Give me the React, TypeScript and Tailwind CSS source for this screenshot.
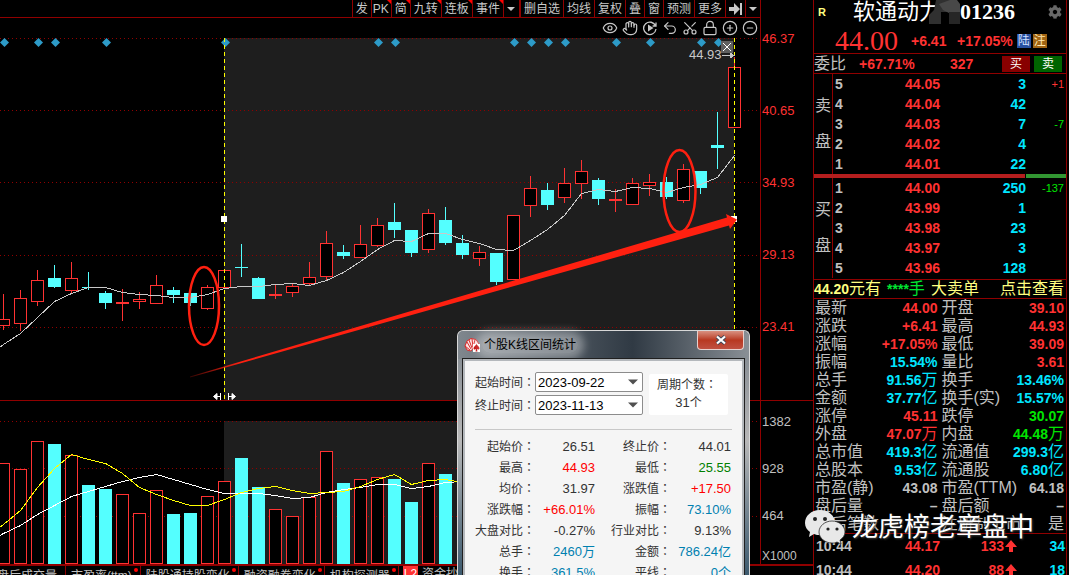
import React from 'react';
import { CircleMinus, CirclePlus, Eye, Hand, Lock, Scissors, Undo2 } from 'lucide-react';
import { FaCog } from 'react-icons/fa';
import clsx from 'clsx';

const STEP = 17;
const centerOf = (i: number) => 3.5 + i * STEP;

type Candle = [high: number, top: number, bottom: number, low: number, up: 0 | 1];

const candles: Candle[] = [
  [294, 319, 326, 330, 1],
  [290, 298, 324, 331, 1],
  [270, 280, 302, 306, 1],
  [265, 278, 287, 288, 0],
  [262, 278, 291, 294, 1],
  [272, 287, 288, 290, 0],
  [291, 293, 303, 309, 0],
  [289, 302, 304, 321, 1],
  [292, 299, 302, 309, 1],
  [275, 285, 304, 304, 1],
  [287, 290, 295, 303, 0],
  [293, 293, 303, 306, 0],
  [285, 287, 309, 310, 1],
  [270, 270, 288, 288, 1],
  [244, 267, 268, 277, 0],
  [277, 278, 299, 299, 0],
  [285, 294, 296, 299, 1],
  [284, 286, 293, 297, 1],
  [262, 277, 284, 285, 1],
  [231, 243, 277, 280, 1],
  [245, 252, 256, 259, 0],
  [225, 244, 258, 258, 1],
  [218, 225, 246, 247, 1],
  [203, 222, 230, 238, 0],
  [230, 230, 253, 257, 0],
  [209, 213, 250, 253, 1],
  [207, 220, 243, 245, 0],
  [235, 243, 255, 259, 0],
  [246, 252, 259, 266, 1],
  [253, 253, 282, 285, 0],
  [215, 215, 280, 280, 1],
  [176, 188, 206, 217, 1],
  [183, 190, 205, 210, 0],
  [168, 183, 198, 203, 1],
  [160, 171, 184, 199, 1],
  [178, 180, 199, 205, 0],
  [189, 199, 201, 212, 1],
  [178, 183, 205, 205, 1],
  [174, 182, 186, 196, 1],
  [177, 182, 197, 199, 0],
  [164, 169, 201, 203, 1],
  [171, 171, 188, 194, 0],
  [112, 145, 148, 169, 0],
  [57, 67, 128, 128, 1],
];

// The first value of each average belongs to the candle left of the visible range
const priceMa = [
  356, 344, 333, 317, 301, 293, 287, 287, 292, 294, 295, 297, 297, 294, 288, 286, 286, 284, 283, 285, 280, 272,
  261, 249, 240, 241, 233, 233, 239, 243, 249, 250, 240, 229, 215, 193, 189, 191, 187, 188, 192, 187, 184, 177,
  155,
];

// [top, up]
const volumes: [number, 0 | 1][] = [
  [463, 1], [469, 1], [441, 1], [444, 0], [455, 1], [485, 0], [489, 0], [494, 1], [513, 1],
  [490, 1], [514, 0], [513, 0], [496, 1], [481, 1], [458, 0], [487, 0], [509, 1], [516, 1],
  [497, 1], [451, 1], [483, 0], [479, 1], [477, 1], [479, 0], [502, 0], [463, 1], [474, 0],
];

const volumeMa5 = [
  537, 524, 510, 487, 468, 454, 459, 463, 473, 487, 494, 500, 505, 505, 499, 492, 488, 486, 490, 493, 492, 491,
  486, 479, 474, 484, 480, 479, 482,
];

const volumeMa10 = [
  542, 533, 525, 514, 505, 496, 491, 486, 481, 477, 474, 479, 484, 489, 493, 493, 493, 495, 498, 497, 492, 489,
  487, 484, 484, 488, 486, 482, 481,
];

const eventMarks = [0, 2, 3, 6, 13, 22, 23, 30, 31, 32, 33, 36, 38, 41, 42];

const toPoints = (values: number[]) => values.map((y, i) => `${centerOf(i - 1)},${y + 0.5}`).join(' ');

const menuItems = [
  { label: '发' },
  { label: 'PK', hot: true },
  { label: '简', hot: true },
  { label: '九转', hot: true },
  { label: '连板', hot: true },
  { label: '事件', hot: true },
];

const menuItemsRight = ['删自选', '均线', '复权', '叠', '窗', '预测', '更多'];

const bottomTabs = [
  { label: '盘后成交量', dot: false },
  { label: '市盈率(ttm)', dot: true },
  { label: '陆股通持股变化', dot: true },
  { label: '融资融券变化', dot: true },
  { label: '机构探测器', dot: true },
];

const asks = [
  ['5', '44.05', '3', '+1'],
  ['4', '44.04', '42', ''],
  ['3', '44.03', '7', '-7'],
  ['2', '44.02', '4', ''],
  ['1', '44.01', '22', ''],
];

const bids = [
  ['1', '44.00', '250', '-137'],
  ['2', '43.99', '1', ''],
  ['3', '43.98', '23', ''],
  ['4', '43.97', '3', ''],
  ['5', '43.96', '128', ''],
];

const RED = 'text-[#ff3232]';
const CYAN = 'text-[#00e6ff]';
const GREEN = 'text-[#00e600]';
const GRAY = 'text-[#c0c0c0]';

type Stat = [label: string, value: string, unit: string, color: string];

const stats: Stat[] = [
  ['最新', '44.00', '', RED],
  ['开盘', '39.10', '', RED],
  ['涨跌', '+6.41', '', RED],
  ['最高', '44.93', '', RED],
  ['涨幅', '+17.05%', '', RED],
  ['最低', '39.09', '', RED],
  ['振幅', '15.54%', '', CYAN],
  ['量比', '3.61', '', RED],
  ['总手', '91.56', '万', CYAN],
  ['换手', '13.46%', '', CYAN],
  ['金额', '37.77', '亿', CYAN],
  ['换手(实)', '15.57%', '', CYAN],
  ['涨停', '45.11', '', RED],
  ['跌停', '30.07', '', GREEN],
  ['外盘', '47.07', '万', RED],
  ['内盘', '44.48', '万', GREEN],
  ['总市值', '419.3', '亿', CYAN],
  ['流通值', '299.3', '亿', CYAN],
  ['总股本', '9.53', '亿', CYAN],
  ['流通股', '6.80', '亿', CYAN],
  ['市盈(静)', '43.08', '', GRAY],
  ['市盈(TTM)', '64.18', '', GRAY],
  ['盘后量', '–', '', GRAY],
  ['盘后额', '–', '', GRAY],
  ['盘后笔数', '', '', GRAY],
  ['注册制上市', '', '是', GRAY],
];

const rangeStats: [string, string, string][] = [
  ['起始价', '26.51', 'text-[#333333]'],
  ['终止价', '44.01', 'text-[#333333]'],
  ['最高', '44.93', 'text-[#ff0000]'],
  ['最低', '25.55', 'text-[#008000]'],
  ['均价', '31.97', 'text-[#333333]'],
  ['涨跌值', '+17.50', 'text-[#ff0000]'],
  ['涨跌幅', '+66.01%', 'text-[#ff0000]'],
  ['振幅', '73.10%', 'text-[#0080b0]'],
  ['大盘对比', '-0.27%', 'text-[#333333]'],
  ['行业对比', '9.13%', 'text-[#333333]'],
  ['总手', '2460万', 'text-[#0080b0]'],
  ['金额', '786.24亿', 'text-[#0080b0]'],
  ['换手', '361.5%', 'text-[#0080b0]'],
  ['平线', '0个', 'text-[#0080b0]'],
];

const GridLine: React.FC<{ y: number }> = ({ y }) => (
  <line x1="0" x2="760" y1={y + 0.5} y2={y + 0.5} stroke="#900000" strokeDasharray="1 3" />
);

const CandleMark: React.FC<{ index: number; candle: Candle }> = ({ index, candle }) => {
  const [high, top, bottom, low, up] = candle;
  const x = centerOf(index);
  const color = up ? '#ff3232' : '#54ffff';
  const solid = !up || bottom - top < 3;

  return (
    <g>
      <line x1={x} x2={x} y1={high} y2={low} stroke={color} />
      {solid ? (
        <rect x={x - 6.5} y={top} width="13" height={bottom - top} fill={color} />
      ) : (
        <rect x={x - 6} y={top + 0.5} width="12" height={bottom - top - 1} fill="#000000" stroke={color} />
      )}
    </g>
  );
};

const PriceChart = () => (
  <svg
    viewBox="0 38 760 362"
    preserveAspectRatio="none"
    className="block w-full h-[362px]"
    shapeRendering="crispEdges"
    role="img"
    aria-label="日K线"
  >
    <defs>
      <linearGradient id="trendFade" gradientUnits="userSpaceOnUse" x1="190" y1="0" x2="240" y2="0">
        <stop offset="0" stopColor="#ff2010" stopOpacity="0.2" />
        <stop offset="1" stopColor="#ff2010" />
      </linearGradient>
    </defs>
    <rect x="224" y="38" width="510" height="362" fill="#1e1e1e" />
    {[38, 110, 182, 255, 327].map((y) => (
      <GridLine key={y} y={y} />
    ))}
    {candles.map((candle, i) => (
      <CandleMark key={i} index={i} candle={candle} />
    ))}
    <polyline points={toPoints(priceMa)} fill="none" stroke="#c8c8c8" />
    {eventMarks.map((i) => (
      <path
        key={i}
        d={`M${centerOf(i) + 1} 38l4.5 4.5l-4.5 4.5l-4.5 -4.5z`}
        fill="#2d9bc8"
        shapeRendering="geometricPrecision"
      />
    ))}

    {/* Selected range */}
    <g stroke="#ffff00" strokeDasharray="4 3">
      <line x1="224.5" x2="224.5" y1="38" y2="400" />
      <line x1="734.5" x2="734.5" y1="38" y2="400" />
    </g>
    <rect x="221" y="216" width="6" height="6" fill="#ffffff" />
    <rect x="731" y="216" width="6" height="6" fill="#ffffff" />
    <g fill="#ffffff" stroke="#ffffff" shapeRendering="geometricPrecision">
      <path d="M213.5 396.5l3.500 -3v6zM217 396.5h3M220.5 393v7" />
      <path d="M235.5 396.5l-3.500 -3v6zM232 396.5h-3M228.5 393v7" />
    </g>

    <rect x="721" y="41" width="12" height="12" fill="#5f5f5f" />
    <path d="M723 43l8 8M731 43l-8 8" stroke="#ffffff" shapeRendering="geometricPrecision" />
    <path d="M722 55.5h12M730 53l4 2.500l-4 2.500z" stroke="#c8c8c8" fill="#c8c8c8" />
    <text x="689" y="59" fill="#c8c8c8" fontSize="13">
      44.93
    </text>

    {/* Hand-drawn marks */}
    <g shapeRendering="geometricPrecision">
      <ellipse cx="204" cy="306" rx="15" ry="39" fill="none" stroke="#ff2010" strokeWidth="2.5" />
      <ellipse cx="679.5" cy="191" rx="16" ry="41" fill="none" stroke="#ff2010" strokeWidth="2.5" />
      <path d="M190 376.5L727 217.500L726 214L737 219.500L730 229L729 225.500L190 377.500z" fill="url(#trendFade)" />
    </g>
  </svg>
);

const VolumeChart = () => (
  <svg
    viewBox="0 401 760 163"
    preserveAspectRatio="none"
    className="block w-full h-[163px]"
    shapeRendering="crispEdges"
    role="img"
    aria-label="成交量"
  >
    <rect x="224" y="421" width="510" height="143" fill="#1e1e1e" />
    {[421, 468, 516].map((y) => (
      <GridLine key={y} y={y} />
    ))}
    {volumes.map(([top, up], i) =>
      up ? (
        <rect key={i} x={centerOf(i) - 6} y={top + 0.5} width="12" height={563 - top} fill="#000000" stroke="#ff3232" />
      ) : (
        <rect key={i} x={centerOf(i) - 6.5} y={top} width="13" height={564 - top} fill="#54ffff" />
      ),
    )}
    <polyline points={toPoints(volumeMa10)} fill="none" stroke="#ffffff" />
    <polyline points={toPoints(volumeMa5)} fill="none" stroke="#ffff00" />
  </svg>
);

const Caret: React.FC<{ className: string }> = ({ className }) => (
  <svg viewBox="0 0 10 5" className={className} aria-hidden="true">
    <path d="M0 0h10l-5 5z" fill="currentColor" />
  </svg>
);

const MenuBar = () => {
  const cell = 'relative flex items-center px-[3px] border-l border-[#900000] leading-none whitespace-nowrap';

  return (
    <nav className="flex justify-end h-[18px] border-b border-[#900000] text-xs text-[#c8c8c8]">
      {menuItems.map((item) => (
        <button key={item.label} className={clsx(cell, item.label === 'PK' && 'w-5 px-px')}>
          {item.label}
          {item.hot && (
            <svg viewBox="0 0 4 4" className="absolute top-0 right-0 w-1 h-1">
              <path d="M0 0h4v4z" fill="#ff0000" />
            </svg>
          )}
        </button>
      ))}
      <button aria-label="更多指标" className={clsx(cell, 'w-4')}>
        <Caret className="w-2 h-1" />
      </button>
      {menuItemsRight.map((label, i) => (
        <button key={label} className={clsx(cell, i === 0 && 'border-l-2')}>
          {label}
        </button>
      ))}
      <button aria-label="展开" className={clsx(cell, 'w-5')}>
        <svg viewBox="0 0 13 12" className="w-[13px] h-3" fill="currentColor">
          <path d="M0 4h5V0l6 6l-6 6V8H0zM11 0h2v12h-2z" />
        </svg>
      </button>
      <button aria-label="菜单" className={clsx(cell, 'w-[15px]')}>
        <Caret className="w-2 h-1" />
      </button>
    </nav>
  );
};

const DrawingTools = () => {
  const icon = 'w-4 h-4';

  return (
    <div className="flex justify-end items-center gap-1 h-5 pr-0.5 text-[#c8c8c8]">
      <button aria-label="显示">
        <Eye className={icon} strokeWidth={1.8} />
      </button>
      <button aria-label="拖动">
        <Hand className={icon} strokeWidth={1.8} />
      </button>
      <button aria-label="回放">
        <svg viewBox="-1 -1 16 16" className={icon} fill="none" stroke="currentColor" strokeWidth="1.3">
          <path d="M12.600 5A6.200 6.200 0 1 0 13 8M13 1.600V5H9.600" />
          <path d="M5 3.500l5.500 3.500l-5.500 3.500z" fill="currentColor" stroke="none" />
        </svg>
      </button>
      <button aria-label="撤销">
        <Undo2 className={icon} strokeWidth={1.8} />
      </button>
      <button aria-label="剪切">
        <Scissors className="w-4 h-4 -rotate-90" strokeWidth={1.8} />
      </button>
      <button aria-label="锁定">
        <Lock className={icon} strokeWidth={1.8} />
      </button>
      <button aria-label="放大">
        <CirclePlus className={icon} strokeWidth={1.8} />
      </button>
      <button aria-label="缩小">
        <CircleMinus className={icon} strokeWidth={1.8} />
      </button>
    </div>
  );
};

const Colon = () => <span className="font-['Noto_Sans_CJK_TC',sans-serif]">：</span>;

const DateSelect: React.FC<{ id: string; label: string; value: string }> = ({ id, label, value }) => (
  <div className="flex items-center h-5">
    <label htmlFor={id} className="w-[60px] whitespace-nowrap text-[#333333]">
      {label}
      <Colon />
    </label>
    <div className="relative flex-1">
      <select
        id={id}
        defaultValue={value}
        className="block w-full h-5 pl-0.5 appearance-none bg-white border border-[#8c8c8c] rounded-xs text-[13px] leading-none text-black"
      >
        <option value={value}>{value}</option>
      </select>
      <Caret className="absolute right-[5px] top-[7px] w-2.5 h-1.5 text-[#505050] pointer-events-none" />
    </div>
  </div>
);

const RangeDialog = () => (
  <section
    role="dialog"
    aria-label="个股K线区间统计"
    className="absolute right-[63px] top-[330px] bottom-0 flex flex-col w-[293px] px-1 rounded-t-md border border-b-0 border-[#d8d8d8] bg-linear-to-b from-[#7a828a] via-[#b8b8b8] via-45% to-[#3c5a6e] text-xs"
  >
    <div className="absolute inset-x-0 top-0 h-7 rounded-t-md bg-linear-to-r from-[#80878e] via-[#303a44] via-60% to-[#8a9096]" />
    <header className="relative flex justify-between h-[27px]">
      <div className="flex items-center gap-0.5 pl-0.5 text-black">
        <svg viewBox="0 0 16 14" className="w-4 h-3.5">
          <path d="M1 8L3 3L7 0.5L12 1.500L15 6L11 8L7 13L3 12z" fill="#fbe3e3" stroke="#d82828" />
          <path d="M3 4l4 7M5 2l3 8M8 1l1 8M11 2l-2 7M1 8l5 4" stroke="#d82828" />
          <path d="M9 6h7v8H9z" fill="#ffffff" />
          <path d="M12.500 6c-1 2-3 2.500-3 4.300c0 1.500 2 1.500 2.600.8L11.500 13.500h2l-.6-2.400c.6.700 2.600.700 2.600-.8c0-1.800-2-2.300-3-4.300z" fill="#c00000" />
        </svg>
        <h2 className="px-0.5 rounded-full bg-white/35 shadow-[0_0_8px_6px_rgba(255,255,255,0.35)] leading-4">
          个股K线区间统计
        </h2>
      </div>
      <button
        aria-label="关闭"
        className="flex justify-center items-center w-[47px] h-[19px] mr-px rounded-b-sm border border-t-0 border-[#e8d0cc] bg-linear-to-b from-[#d89080] via-[#b83820] via-50% to-[#c05040]"
      >
        <svg viewBox="0 0 12 10" className="w-3 h-2.5">
          <path d="M2 1.500l8 7M10 1.500l-8 7" stroke="#404858" strokeWidth="4" />
          <path d="M2 1.500l8 7M10 1.500l-8 7" stroke="#ffffff" strokeWidth="2.200" />
        </svg>
      </button>
    </header>

    <div className="relative flex-1 min-h-0 overflow-hidden border border-b-0 border-[#202020]">
      <div className="h-full px-2.5 pt-[11px] border-2 border-b-0 border-[#b4b8bc] bg-[#f5f5f5]">
        <div className="flex gap-1.5">
          <div className="flex flex-col gap-[3px] w-[168px]">
            <DateSelect id="range-start" label="起始时间" value="2023-09-22" />
            <DateSelect id="range-end" label="终止时间" value="2023-11-13" />
          </div>
          <div className="w-[79px] mt-0.5 pt-px rounded-xs bg-white text-center leading-[18px] text-[#333333]">
            <p className="pl-2 text-left">
              周期个数
              <Colon />
            </p>
            <p>
              <span className="text-[13px]">31</span>个
            </p>
          </div>
        </div>
        <hr className="mt-3.5 mb-1.5 border-[#c8c8c8]" />
        <dl className="grid grid-cols-[60px_60px_76px_60px]">
          {rangeStats.map(([label, value, color]) => (
            <React.Fragment key={label}>
              <dt className="h-[21px] leading-[20px] text-right whitespace-nowrap text-[#333333]">
                {label}
                <Colon />
              </dt>
              <dd className={clsx('h-[21px] leading-[21px] text-right text-[13px] whitespace-nowrap', color)}>
                {value}
              </dd>
            </React.Fragment>
          ))}
        </dl>
      </div>
    </div>
  </section>
);

const DepthTable: React.FC<{ side: string; rows: string[][] }> = ({ side, rows }) => (
  <div className="flex h-[100px]">
    <div className="flex flex-col justify-center items-center gap-5 w-[19px] border-r border-[#900000] text-base leading-4 text-[#c0c0c0]">
      <span>{side}</span>
      <span>盘</span>
    </div>
    <table className="flex-1 table-fixed text-sm leading-5 font-bold">
      <tbody>
        {rows.map(([level, price, volume, change]) => (
          <tr key={level} className="h-5">
            <td className="w-[14px] pl-0.5 text-[#c0c0c0]">{level}</td>
            <td className="w-[93px] text-right text-[#ff3232]">{price}</td>
            <td className="w-[86px] text-right text-[#00e6ff]">{volume}</td>
            <td
              className={clsx(
                'pr-0.5 text-right text-[11px] font-normal',
                change.startsWith('+') ? 'text-[#ff3232]' : 'text-[#00e600]',
              )}
            >
              {change}
            </td>
          </tr>
        ))}
      </tbody>
    </table>
  </div>
);

const QuotePanel = () => (
  <aside className="w-[254px] shrink-0 border-x border-[#900000] overflow-hidden">
    <header className="h-[54px] border-b border-[#900000]">
      <div className="flex items-center h-6 pl-1 pr-1">
        <span className="w-[35px] text-[11px] font-bold text-[#ffff80]">R</span>
        <h1 className="relative flex items-center text-[22px] leading-6 text-white font-['Liberation_Serif','Noto_Sans_CJK_SC',serif]">
          软通动力
          <svg viewBox="0 0 31 24" className="absolute left-[76px] top-0 w-[31px] h-6">
            <path d="M7 0h14v12H12v12H0V15l5-5z" fill="#303030" />
            <path d="M10 4l11-4h7l3 4v9H20l-6-3z" fill="#484848" />
            <path d="M20 12h11v12H20z" fill="#262626" />
            <path d="M12 14h8v10l-8-1z" fill="#000000" />
          </svg>
          <span className="pl-[19px] font-bold">01236</span>
        </h1>
        <button aria-label="设置" className="ml-auto text-[#686868]">
          <FaCog className="w-3.5 h-3.5" />
        </button>
      </div>
      <div className="flex items-center h-[29px] pt-1 pl-[21px] text-sm font-bold text-[#ff3232]">
        <strong className="w-[76px] text-[28px] leading-7 font-normal font-['Liberation_Serif',serif]">44.00</strong>
        <span className="w-[46px]">+6.41</span>
        <span>+17.05%</span>
        <span className="w-3.5 h-3.5 ml-1 bg-[#2850a0] text-xs leading-3.5 text-center font-normal text-[#d0e0ff]">陆</span>
        <span className="w-3.5 h-3.5 ml-0.5 bg-[#a06414] text-xs leading-3.5 text-center font-normal text-[#ffe8b0]">注</span>
      </div>
    </header>

    <div className="flex items-center h-5 border-b border-[#900000] text-sm font-bold text-[#ff3232]">
      <span className="w-[45px] text-base leading-4 font-normal text-[#c0c0c0]">委比</span>
      <span className="w-[91px]">+67.71%</span>
      <span className="flex-1">327</span>
      <button className="w-7 h-4 mr-1 bg-[#880000] text-xs leading-4 font-normal text-white">买</button>
      <button className="w-7 h-4 mr-1 bg-[#006400] text-xs leading-4 font-normal text-white">卖</button>
    </div>

    <DepthTable side="卖" rows={asks} />
    <div className="flex gap-px h-1">
      <div className="flex-1 bg-[#b41e1e]" />
      <div className="w-10 bg-[#329632]" />
    </div>
    <DepthTable side="买" rows={bids} />

    <div className="flex items-center h-5 mt-px border-y border-[#900000] text-base leading-[18px] text-[#ffff80] whitespace-nowrap">
      <span className="text-sm font-bold">44.20</span>
      <span className="w-[38px]">元有</span>
      <span className="w-[44px] text-[#00e632]">
        <b className="text-sm">****</b>手
      </span>
      <span>大卖单</span>
      <a href="#orders" className="ml-auto pr-0.5">
        点击查看
      </a>
    </div>

    <dl className="grid grid-cols-2 pl-px pr-0.5 gap-x-1">
      {stats.map(([label, value, unit, color]) => (
        <div key={label} className="flex justify-between h-[18px] text-base leading-[18px] whitespace-nowrap">
          <dt className="text-[#c0c0c0]">{label}</dt>
          <dd className={clsx('flex', color)}>
            <b className="text-sm leading-[18px]">{value}</b>
            {unit}
          </dd>
        </div>
      ))}
    </dl>

    <table className="w-full table-fixed border-t border-[#900000] text-sm font-bold text-[#ff3232]">
      <tbody>
        {[
          ['44.17', '133', '34'],
          ['44.20', '88', '18'],
        ].map(([price, volume, count]) => (
          <tr key={price} className="h-6">
            <td className="w-[50px] pl-0.5 text-[#c0c0c0]">10:44</td>
            <td className="w-[76px] text-right">{price}</td>
            <td className="w-[77px]">
              <div className="flex justify-end items-center gap-px">
                {volume}
                <svg viewBox="0 0 12 12" className="w-3 h-3" aria-label="买入">
                  <path d="M6 0l6 7H8v5H4V7H0z" fill="#ff3232" />
                </svg>
              </div>
            </td>
            <td className="pr-px text-right text-[#00e6ff]">{count}</td>
          </tr>
        ))}
      </tbody>
    </table>
  </aside>
);

const Watermark = () => (
  <div className="absolute right-[35px] top-[509px] flex items-center gap-1.5 pointer-events-none">
    <svg viewBox="0 0 42 36" className="w-[42px] h-9">
      <path d="M16 1C7 1 1 7 1 14c0 4 2 7 5 9l-1 5l5-3c2 1 4 1 6 1c8 0 15-5 15-12S25 1 16 1z" fill="#e8e8e8" />
      <path d="M28 12c-7 0-13 5-13 11s6 11 13 11c2 0 3 0 5-1l4 2l-1-4c3-2 5-5 5-8c0-6-6-11-13-11z" fill="#e8e8e8" stroke="#303030" strokeWidth="0.8" />
      <g fill="#202020">
        <circle cx="11" cy="10" r="2" />
        <circle cx="21" cy="10" r="2" />
        <circle cx="24" cy="20" r="1.600" />
        <circle cx="33" cy="20" r="1.600" />
      </g>
    </svg>
    <span className="text-[26px] leading-9 text-white [text-shadow:1px_1px_2px_#404040]">龙虎榜老章盘中</span>
  </div>
);

const App: React.FC = () => (
  <div className="relative flex h-screen pr-0.5 overflow-hidden bg-black font-['Liberation_Sans','Noto_Sans_CJK_SC',sans-serif]">
    <main className="relative flex-1 min-w-0">
      <div className="flex border-b border-[#900000]">
        <div className="flex-1 min-w-0 border-r border-[#900000]">
          <MenuBar />
          <DrawingTools />
          <PriceChart />
        </div>
        <div className="flex flex-col gap-[54px] w-[52px] pt-[30px] pl-px text-[13px] leading-[18px] text-[#ff3232]">
          <span>46.37</span>
          <span>40.65</span>
          <span>34.93</span>
          <span>29.13</span>
          <span>23.41</span>
        </div>
      </div>

      <div className="flex border-b-2 border-[#900000]">
        <div className="flex-1 min-w-0 border-r border-[#900000]">
          <VolumeChart />
        </div>
        <div className="flex flex-col justify-between w-[52px] pt-3 pl-px text-[13px] leading-[18px] text-[#c0c0c0]">
          <div className="flex flex-col gap-[29px]">
            <span>1382</span>
            <span>928</span>
            <span>464</span>
          </div>
          <span className="text-xs leading-4">X1000</span>
        </div>
      </div>

      <div className="flex h-5 -ml-2 text-xs leading-4 text-[#c0c0c0] whitespace-nowrap">
        {bottomTabs.map((tab) => (
          <button key={tab.label} className="relative pl-[5px] pr-2 border-r border-[#900000]">
            {tab.label}
            {tab.dot && <span className="absolute right-0.5 top-0.5 w-1 h-1 rounded-full bg-[#ff0000]" />}
          </button>
        ))}
        <button className="flex items-start gap-1 pl-1">
          <span className="px-px bg-[#ff3232] text-white">L2</span>
          资金抄底
        </button>
      </div>

      <RangeDialog />
    </main>
    <QuotePanel />
    <Watermark />
  </div>
);

export default App;
